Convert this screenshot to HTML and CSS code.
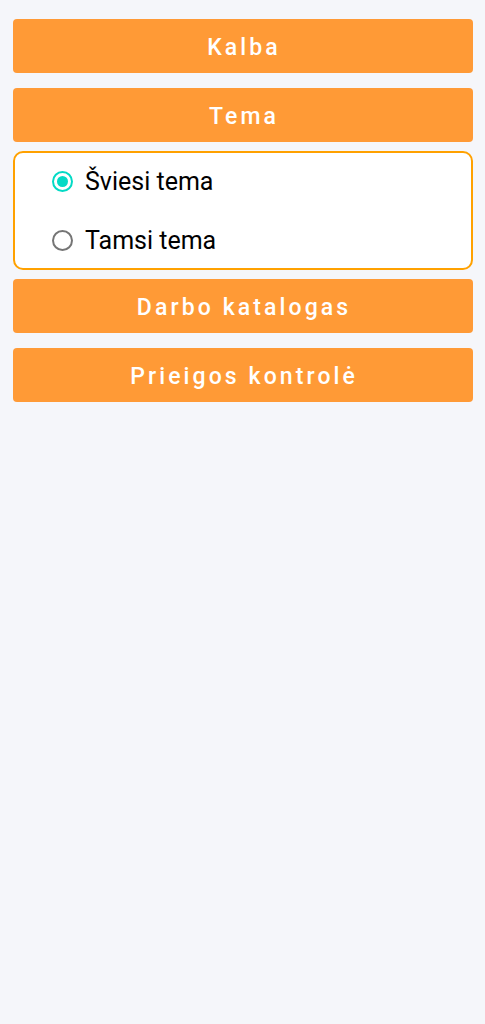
FILE: index.html
```html
<!DOCTYPE html>
<html lang="lt">
<head>
<meta charset="utf-8">
<title>Nustatymai</title>
<link rel="stylesheet" href="styles.css">
</head>
<body>
<main class="settings">
  <button class="btn btn-first">Kalba</button>
  <button class="btn">Tema</button>
  <div class="panel" role="radiogroup">
    <label class="option option-first">
      <span class="radio radio-on"></span>
      <span class="option-text">Šviesi tema</span>
    </label>
    <label class="option option-last">
      <span class="radio"></span>
      <span class="option-text">Tamsi tema</span>
    </label>
  </div>
  <button class="btn btn-after-panel">Darbo katalogas</button>
  <button class="btn">Prieigos kontrolė</button>
</main>
</body>
</html>
```
FILE: styles.css
```css
html, body {
  margin: 0;
  padding: 0;
  background: #f5f6fa;
}
body {
  font-family: Roboto, "Noto Sans", sans-serif;
}
.settings {
  display: flex;
  flex-direction: column;
  padding: 19px 12.5px 0 12.5px;
}
.btn {
  display: block;
  box-sizing: border-box;
  width: 100%;
  height: 54px;
  margin: 15px 0 0 0;
  border: none;
  border-radius: 4px;
  background: #ff9a36;
  color: #ffffff;
  font-family: Roboto, sans-serif;
  font-weight: 500;
  font-size: 23px;
  letter-spacing: 3.1px;
  padding: 3px 0 0 3.1px;
}
.btn-first {
  margin-top: 0;
}
.panel {
  margin-top: 9px;
  border: 2px solid #ffa100;
  border-radius: 10px;
  background: #ffffff;
  display: flex;
  flex-direction: column;
}
.btn-after-panel {
  margin-top: 9px;
}
.option {
  box-sizing: border-box;
  display: flex;
  align-items: center;
  padding-left: 37.5px;
}
.option-first {
  height: 56px;
}
.option-last {
  height: 59px;
  padding-top: 4px;
}
.radio {
  box-sizing: border-box;
  width: 21px;
  height: 21px;
  border: 2px solid #757575;
  border-radius: 50%;
  display: flex;
  align-items: center;
  justify-content: center;
  flex: none;
}
.radio-on {
  border-color: #03dac5;
}
.radio-on::after {
  content: "";
  width: 11px;
  height: 11px;
  border-radius: 50%;
  background: #03dac5;
}
.option-text {
  margin-left: 12px;
  font-size: 25px;
  color: #000000;
}
```
